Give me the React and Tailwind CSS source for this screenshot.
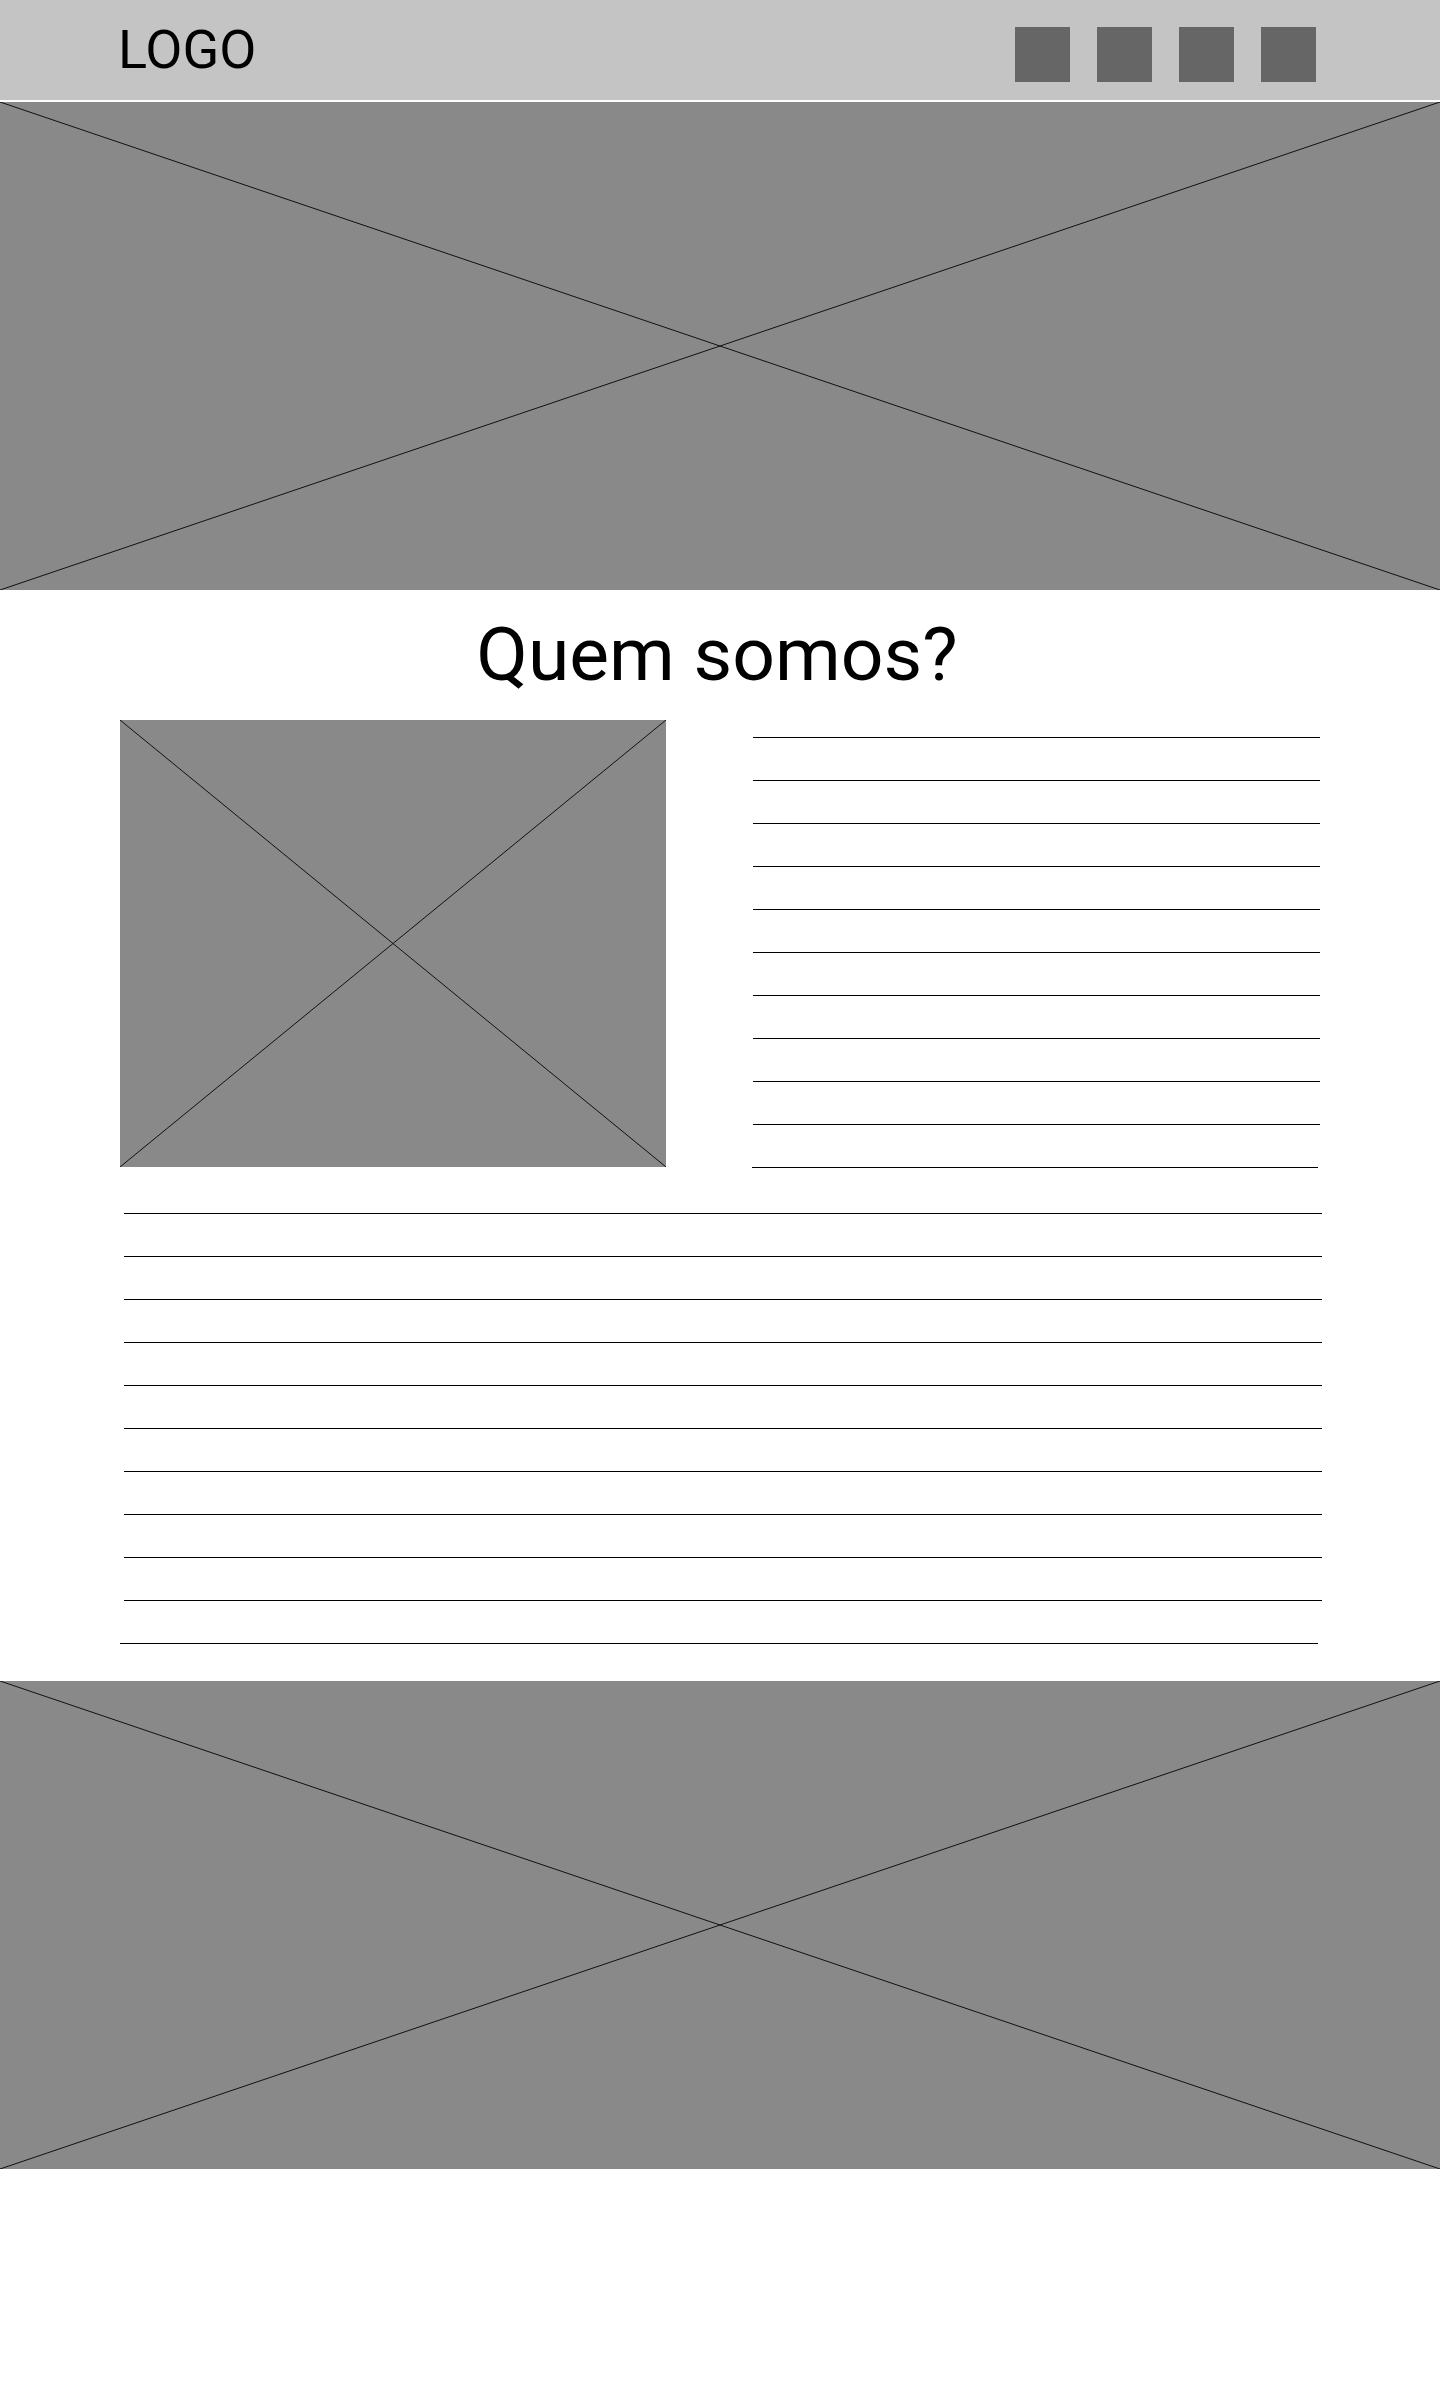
import React from "react";

const NAV_ITEMS = ["a", "b", "c", "d"];
const SIDE_LINES = Array.from({ length: 11 }, (_, i) => i);
const BODY_LINES = Array.from({ length: 11 }, (_, i) => i);

// placeholder with an X across it, like a wireframe image
const Placeholder = ({ className = "" }) => (
  <div className={`bg-[#898989] ${className}`}>
    <svg
      className="block w-full h-full"
      viewBox="0 0 100 100"
      preserveAspectRatio="none"
    >
      <line x1="0" y1="0" x2="100" y2="100" stroke="#111" strokeWidth="1" vectorEffect="non-scaling-stroke" />
      <line x1="100" y1="0" x2="0" y2="100" stroke="#111" strokeWidth="1" vectorEffect="non-scaling-stroke" />
    </svg>
  </div>
);

const Header = () => (
  <header className="h-[100px] bg-[#c4c4c4] flex items-start justify-between pl-[118px] pr-[124px]">
    <div className="mt-[23px] text-[54px] leading-none text-black">LOGO</div>
    <nav className="mt-[27px] flex gap-[27px]">
      {NAV_ITEMS.map((item) => (
        <div key={item} className="w-[55px] h-[55px] bg-[#666666]" />
      ))}
    </nav>
  </header>
);

export default function App() {
  return (
    <div className="bg-white min-h-[2382px] font-['Roboto','Liberation_Sans',sans-serif]">
      <Header />

      <Placeholder className="mt-[2px] h-[488px]" />

      <section>
        <h1 className="mt-[27px] pr-[6px] text-center text-[75px] leading-none font-normal text-black">
          Quem somos?
        </h1>

        <div className="mt-[28px] flex pl-[120px]">
          <Placeholder className="w-[546px] h-[447px]" />
          <div className="ml-[87px] w-[567px] pt-[17px] flex flex-col gap-[42px]">
            {SIDE_LINES.map((i) => (
              <div
                key={i}
                className={
                  i === SIDE_LINES.length - 1
                    ? "h-px bg-black -ml-px w-[566px]"
                    : "h-px bg-black w-[567px]"
                }
              />
            ))}
          </div>
        </div>

        <div className="mt-[45px] flex flex-col gap-[42px]">
          {BODY_LINES.map((i) => (
            <div
              key={i}
              className={
                i === BODY_LINES.length - 1
                  ? "h-px bg-black ml-[120px] w-[1198px]"
                  : "h-px bg-black ml-[124px] w-[1198px]"
              }
            />
          ))}
        </div>
      </section>

      <Placeholder className="mt-[37px] h-[488px]" />
    </div>
  );
}
